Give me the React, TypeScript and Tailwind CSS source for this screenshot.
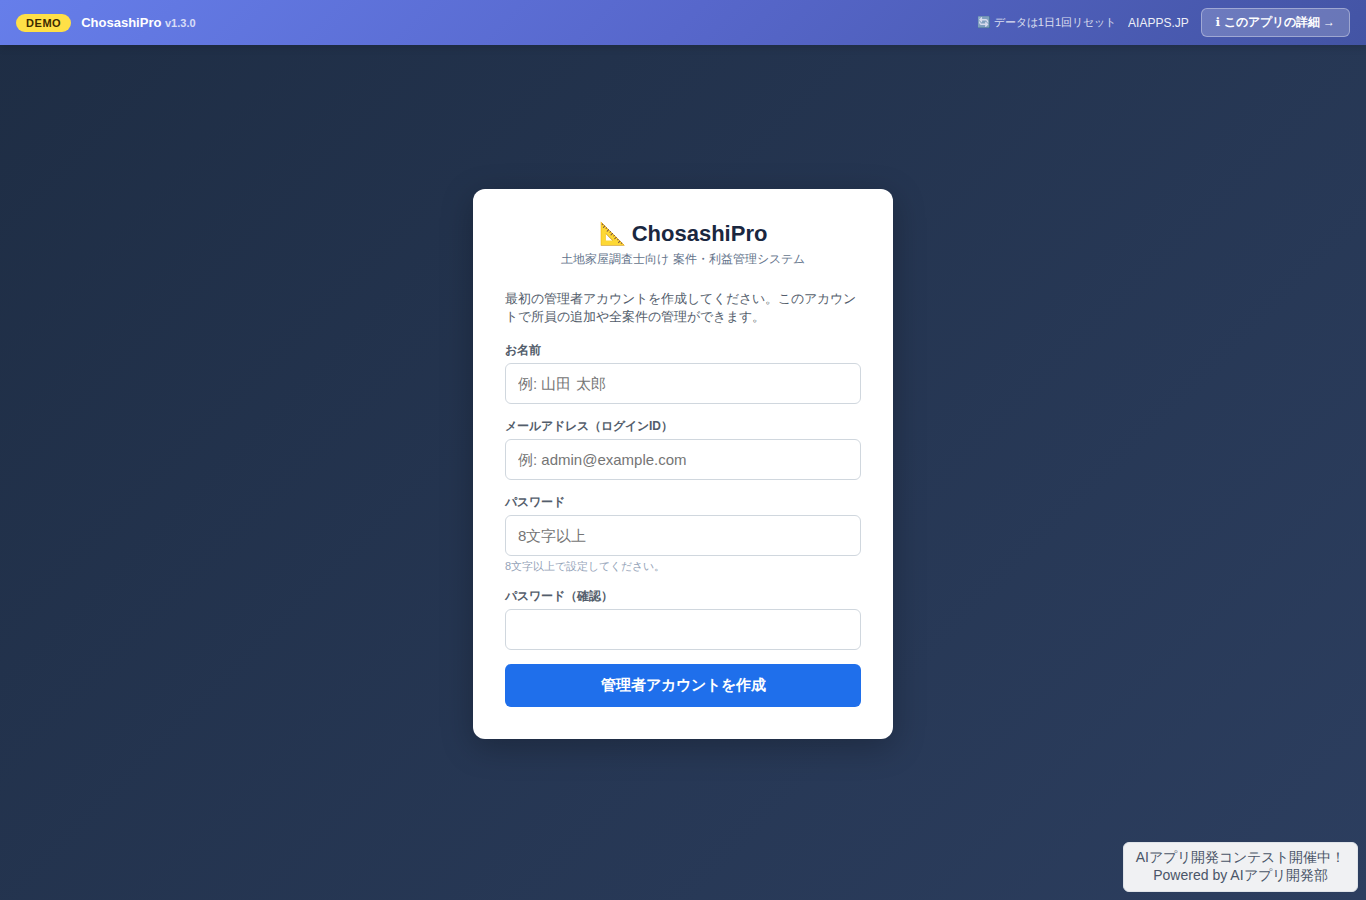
import React from "react";

type FieldProps = {
  id: string;
  label: string;
  type: string;
  placeholder?: string;
  hint?: string;
};

function Field({ id, label, type, placeholder, hint }: FieldProps) {
  return (
    <div className="mb-3.5">
      <label htmlFor={id} className="mb-1 block text-xs leading-[17px] font-semibold text-[#535d6b]">
        {label}
      </label>
      <input
        id={id}
        type={type}
        placeholder={placeholder}
        className="block h-[41px] w-full rounded-md border border-[#d0d7de] bg-white px-3 text-[15px] text-[#1a202c] outline-none placeholder:text-[#757575] focus:border-[#1f6feb]"
      />
      {hint && <p className="mt-0.5 text-[11px] leading-4 text-[#94a3b8]">{hint}</p>}
    </div>
  );
}

function DemoBar() {
  return (
    <header className="z-10 flex min-h-[45px] items-center justify-between bg-linear-[135deg,#667eea_0%,#5767cb_50%,#4354a4_100%] px-4 py-2 text-white shadow-[0_2px_8px_rgba(0,0,0,0.15)]">
      <div className="flex items-center gap-2.5">
        <span className="rounded-full bg-[#ffe047] px-2.5 text-[11px] leading-[18px] font-bold tracking-wider text-[#3b2a00]">
          DEMO
        </span>
        <span className="text-[13px] font-bold">
          ChosashiPro <span className="text-[11px] opacity-75">v1.3.0</span>
        </span>
      </div>
      <div className="flex items-center gap-3 text-xs">
        <span className="text-[11px] opacity-80">🔄 データは1日1回リセット</span>
        <a href="#aiapps" className="opacity-90">
          AIAPPS.JP
        </a>
        <a
          href="#detail"
          className="rounded-md border border-white/35 bg-white/20 px-3.5 py-1 leading-[19px] font-semibold"
        >
          <span className="font-['DejaVu_Sans',sans-serif]">ℹ</span> このアプリの詳細 →
        </a>
      </div>
    </header>
  );
}

export default function App() {
  return (
    <div className="flex min-h-screen flex-col bg-linear-[135deg,#1e2d44_0%,#2c3e5f_100%] font-['Liberation_Sans',sans-serif]">
      <DemoBar />
      <main className="flex flex-1 items-center justify-center px-4 pt-[15px] pb-8">
        <form className="w-full max-w-[420px] rounded-xl bg-white p-8 shadow-[0_8px_32px_rgba(0,0,0,0.25)]">
          <h1 className="text-center text-[22px] leading-[26px] font-bold text-[#1a2740]">📐 ChosashiPro</h1>
          <p className="mt-0.5 mb-[21px] text-center text-xs leading-5 text-[#64748b]">
            土地家屋調査士向け 案件・利益管理システム
          </p>
          <p className="mb-4 text-[13px] leading-[18px] text-[#535d6b]">
            最初の管理者アカウントを作成してください。このアカウントで所員の追加や全案件の管理ができます。
          </p>
          <Field id="name" label="お名前" type="text" placeholder="例: 山田 太郎" />
          <Field id="email" label="メールアドレス（ログインID）" type="email" placeholder="例: admin@example.com" />
          <Field
            id="password"
            label="パスワード"
            type="password"
            placeholder="8文字以上"
            hint="8文字以上で設定してください。"
          />
          <Field id="confirm" label="パスワード（確認）" type="password" />
          <button
            type="submit"
            className="block h-[43px] w-full rounded-md bg-[#1f6feb] text-[15px] font-semibold text-white"
          >
            管理者アカウントを作成
          </button>
        </form>
      </main>
      <aside className="fixed right-2 bottom-2 rounded-md border border-[#dfe3e8] bg-[#f0f1f3] px-3 pt-[5px] pb-[7px] text-center text-sm leading-[18px] text-[#4a5568]">
        <p>AIアプリ開発コンテスト開催中！</p>
        <p>
          Powered by <a href="#aiapps">AIアプリ開発部</a>
        </p>
      </aside>
    </div>
  );
}
